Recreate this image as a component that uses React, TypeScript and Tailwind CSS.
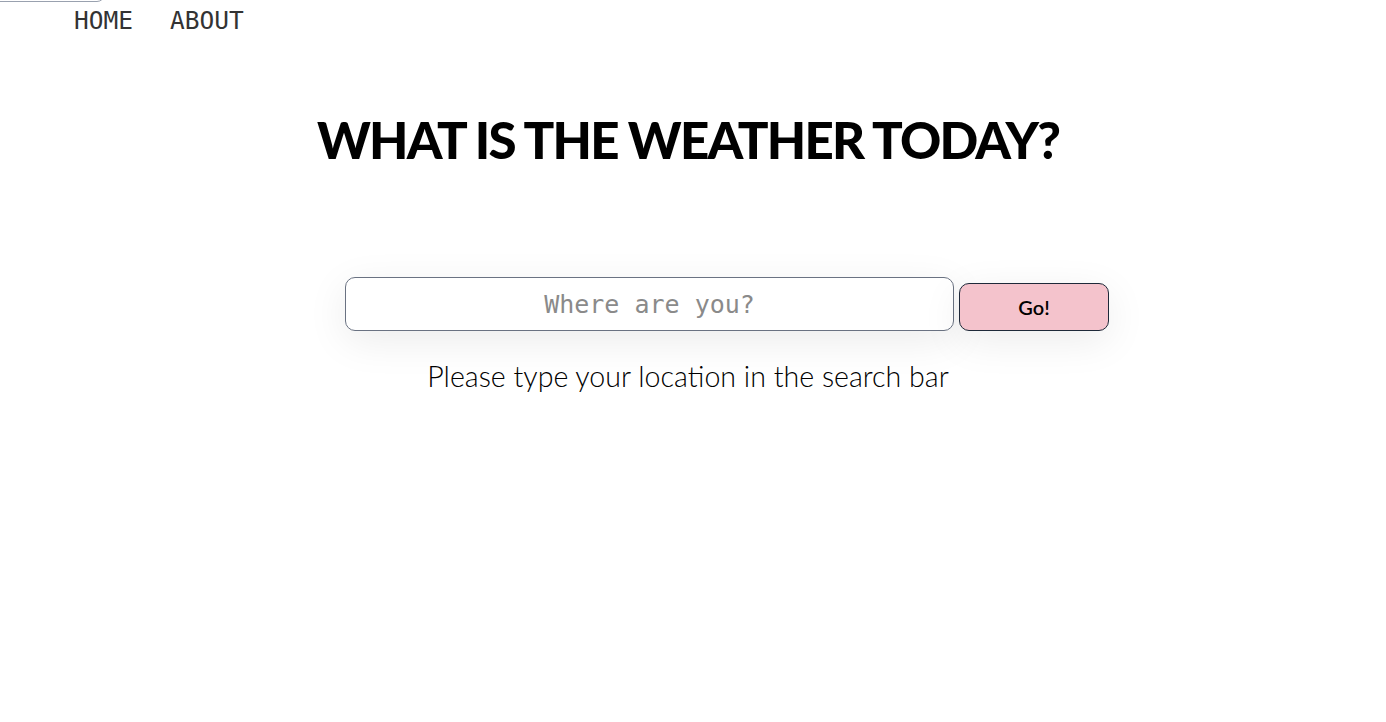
import React from "react";

const mono = { fontFamily: '"DejaVu Sans Mono", "Liberation Mono", monospace' };

export default function App() {
  return (
    <div className="relative min-h-screen bg-white text-black">
      {/* stray logo border peeking above the top edge */}
      <div className="absolute left-[-20px] top-[-40px] h-[42px] w-[125px] rounded-b-[8px] border border-gray-400" />

      <nav className="flex gap-[37px] pl-[74px] pt-[3px] text-[24.5px] leading-[36px] font-extralight text-[#333]" style={mono}>
        <a href="#">HOME</a>
        <a href="#">ABOUT</a>
      </nav>

      <h1 className="mt-[75px] text-center text-[51px] leading-none font-black tracking-[-1.8px] -ml-[10px] font-['Lato',sans-serif]">
        WHAT IS THE WEATHER TODAY?
      </h1>

      <form className="mt-[112px] flex items-end justify-center gap-[5px] ml-[68px]" onSubmit={(e) => e.preventDefault()}>
        <input
          placeholder="Where are you?"
          className="h-[54px] w-[609px] rounded-[10px] border border-gray-500 text-center text-[25px] text-gray-800 placeholder:text-[#8a8a8a] shadow-[0_10px_40px_rgba(0,0,0,0.08)] outline-none"
          style={mono}
        />
        <button className="h-[48px] w-[150px] rounded-[10px] border border-gray-800 bg-[#f4c3cc] text-[20px] font-semibold font-['Lato',sans-serif] shadow-[0_10px_40px_rgba(0,0,0,0.08)]">
          Go!
        </button>
      </form>

      <p className="mt-[24px] text-center text-[28.6px] font-light -ml-[10px] font-['Lato',sans-serif]">
        Please type your location in the search bar
      </p>
    </div>
  );
}
